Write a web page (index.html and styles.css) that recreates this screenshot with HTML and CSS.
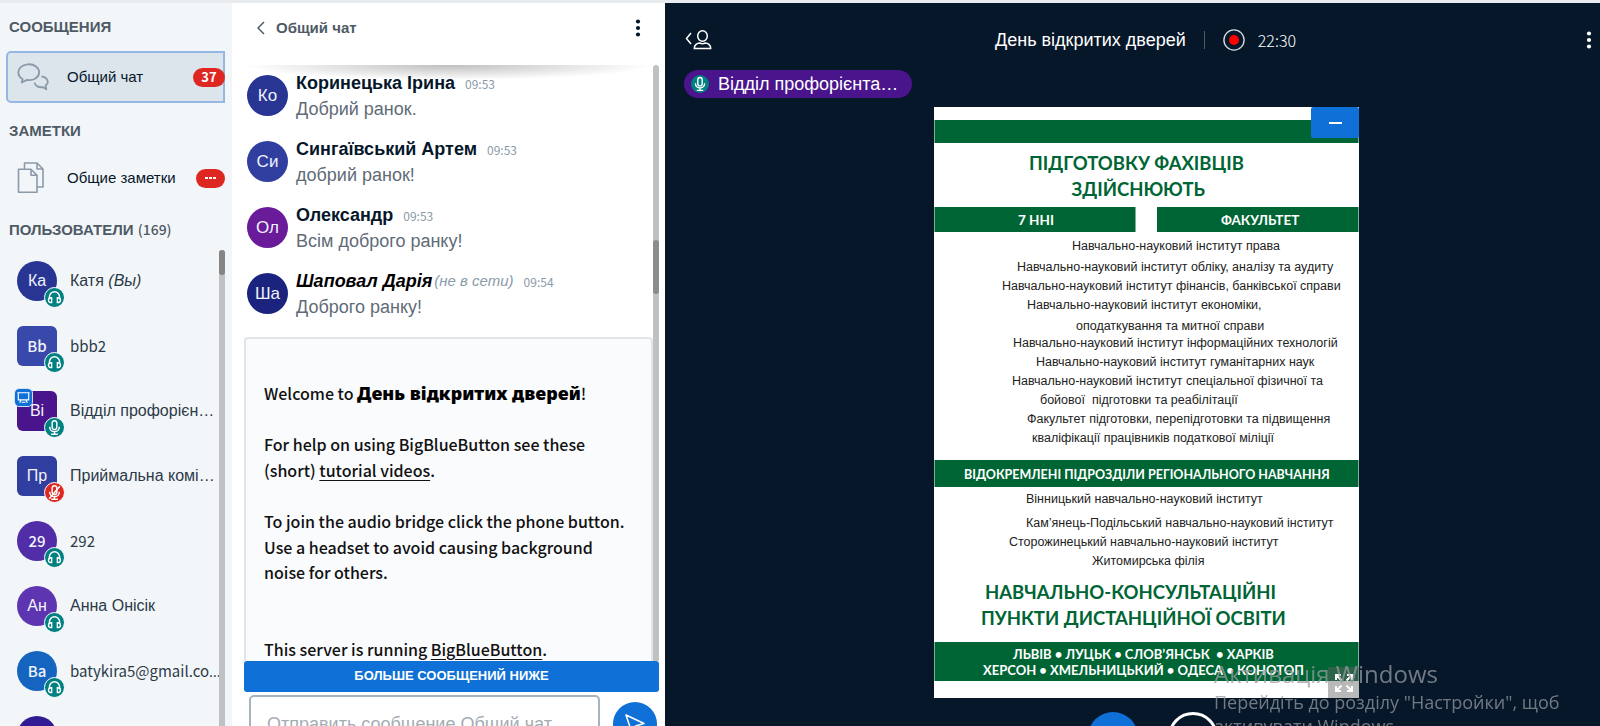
FILE: index.html
```html
<!DOCTYPE html>
<html lang="ru">
<head>
<meta charset="utf-8">
<title>День відкритих дверей</title>
<link rel="stylesheet" href="styles.css">
</head>
<body>
<svg class="sprite" aria-hidden="true">
  <symbol id="i-headset" viewBox="0 0 18 18"><path d="M4.2 10V8.3a4.8 4.8 0 0 1 9.6 0V10" fill="none" stroke="#fff" stroke-width="1.4"/><path d="M6.3 9.2v4.6c-2 0-3-.8-3-2.3s1-2.3 3-2.3zM11.7 9.2v4.6c2 0 3-.8 3-2.3s-1-2.3-3-2.3z" fill="none" stroke="#fff" stroke-width="1.3"/></symbol>
  <symbol id="i-mic" viewBox="0 0 18 18"><g fill="none" stroke="#fff" stroke-width="1.4"><rect x="6.8" y="2.5" width="4.4" height="8.4" rx="2.2"/><path d="M4.4 8.2c0 6.2 9.2 6.2 9.2 0M9 13v2.4M5.8 15.4h6.4"/></g></symbol>
  <symbol id="i-more" viewBox="0 0 6 18"><circle cx="3" cy="2.5" r="2.1"/><circle cx="3" cy="9" r="2.1"/><circle cx="3" cy="15.5" r="2.1"/></symbol>
</svg>
<div class="app">
  <nav class="sidebar">
    <h2 class="side-title">СООБЩЕНИЯ</h2>
    <button class="side-item active" type="button">
      <svg class="side-icon" viewBox="0 0 32 32" fill="none" stroke="#8b9aa8" stroke-width="1.8" stroke-linejoin="round"><path d="M5.6 18.2C.8 15.500 0 9.800 3.500 6.300c3.600-3.600 11-4.200 15.400-.8 4.500 3.400 4.300 9-.5 12-2.600 1.600-5.500 2-8.400 1.400l-5.200 2.600z"/><path d="M24.500 15.500c4.500.3 7.100 3.700 5.900 6.800-.4 1-1 1.700-1.800 2.200l.7 3.800-3.600-2.200c-3.900.6-7.600-1.100-8.200-4.400"/></svg>
      <span class="side-label">Общий чат</span><span class="badge num">37</span>
    </button>
    <h2 class="side-title">ЗАМЕТКИ</h2>
    <button class="side-item notes" type="button">
      <svg class="side-icon" viewBox="0 0 32 32" fill="none" stroke="#8b9aa8" stroke-width="1.6" stroke-linejoin="round"><path d="M7.500 7V1h12.500l6 6v18h-6M20 1v6h6"/><path d="M1.500 7.200h12.500l6 6v17h-18.500zM14 7.200v6h6"/></svg>
      <span class="side-label">Общие заметки</span><span class="badge dots"><i></i><i></i><i></i></span>
    </button>
    <h2 class="side-title">ПОЛЬЗОВАТЕЛИ <span class="count">(169)</span></h2>
    <div class="users-wrap">
      <ul class="users">
        <li><span class="avatar c1">Ка<svg class="status"><use href="#i-headset"/></svg></span><span class="name">Катя <em>(Вы)</em></span></li>
        <li><span class="avatar square c2 latin">Bb<svg class="status"><use href="#i-headset"/></svg></span><span class="name latin">bbb2</span></li>
        <li><span class="avatar square c3">Ві<svg class="presenter" viewBox="0 0 18 18" fill="none" stroke="#fff" stroke-width="1.200"><path d="M2.500 4h13M3.500 4v7.500h11V4M6.500 11.500L5 14.500M11.500 11.500l1.500 3M7 14h4"/></svg><svg class="status"><use href="#i-mic"/></svg></span><span class="name">Відділ профорієн…</span></li>
        <li><span class="avatar square c4">Пр<svg class="status muted" viewBox="0 0 18 18"><use href="#i-mic"/><path d="M4 15L14 3" stroke="#fff" stroke-width="1.400"/></svg></span><span class="name">Приймальна комі…</span></li>
        <li><span class="avatar c5 latin">29<svg class="status"><use href="#i-headset"/></svg></span><span class="name latin">292</span></li>
        <li><span class="avatar c6">Ан<svg class="status"><use href="#i-headset"/></svg></span><span class="name">Анна Онісік</span></li>
        <li><span class="avatar c7 latin">Ba<svg class="status"><use href="#i-headset"/></svg></span><span class="name latin">batykira5@gmail.co<span class="more-text">…</span></span></li>
        <li><span class="avatar c8"></span><span class="name"></span></li>
      </ul>
      <div class="track"><div class="thumb"></div></div>
    </div>
  </nav>

  <section class="chat">
    <header class="chat-head">
      <button class="back" type="button"><svg class="chevron" viewBox="0 0 8 14" fill="none" stroke="#4e5a66" stroke-width="1.500"><path d="M7 1L1 7l6 6"/></svg>Общий чат</button>
      <button class="more" type="button" aria-label="Меню чата"><svg><use href="#i-more"/></svg></button>
    </header>
    <div class="chat-body">
      <div class="messages">
        <article class="msg"><span class="avatar c1">Ко</span><div><p class="who"><b>Коринецька Ірина</b><time>09:53</time></p><p class="text">Добрий ранок.</p></div></article>
        <article class="msg"><span class="avatar c4">Си</span><div><p class="who"><b>Сингаївський Артем</b><time>09:53</time></p><p class="text">добрий ранок!</p></div></article>
        <article class="msg"><span class="avatar c9">Ол</span><div><p class="who"><b>Олександр</b><time>09:53</time></p><p class="text">Всім доброго ранку!</p></div></article>
        <article class="msg"><span class="avatar c10">Ша</span><div><p class="who"><b class="off">Шаповал Дарія</b><em>(не в сети)</em><time>09:54</time></p><p class="text">Доброго ранку!</p></div></article>
        <div class="welcome">Welcome to <strong>День відкритих дверей</strong>!<br><br>For help on using BigBlueButton see these (short) <a href="#">tutorial videos</a>.<br><br>To join the audio bridge click the phone button. Use a headset to avoid causing background noise for others.<br><br><br>This server is running <a href="#">BigBlueButton</a>.</div>
      </div>
      <div class="track"><div class="thumb"></div></div>
    </div>
    <button class="below" type="button">БОЛЬШЕ СООБЩЕНИЙ НИЖЕ</button>
    <form class="composer">
      <input type="text" placeholder="Отправить сообщение Общий чат" aria-label="Отправить сообщение Общий чат">
      <button class="send" type="button" aria-label="Отправить"><svg viewBox="0 0 22 22" fill="none" stroke="#fff" stroke-width="1.500" stroke-linejoin="round"><path d="M2 2l18 8.500L11.500 13 8 20z"/></svg></button>
    </form>
  </section>

  <main class="stage">
    <header class="stage-head">
      <button class="toggle" type="button" aria-label="Пользователи"><svg viewBox="0 0 28 22" fill="none" stroke="#fff" stroke-width="1.500"><path d="M6 4L1.500 9.500 6 15"/><ellipse cx="17.500" cy="7" rx="4.800" ry="5.300"/><path d="M9.300 19.500c0-3.600 3-5.500 5.300-5.500 1.800.8 4 .8 5.800 0 2.300 0 5.300 1.900 5.300 5.500z"/></svg></button>
      <div class="title"><h1>День відкритих дверей</h1><span class="bar"></span><svg class="rec" viewBox="0 0 24 24"><circle cx="12" cy="12" r="11" fill="none" stroke="#d5dae0" stroke-width="1.500"/><circle cx="12" cy="12" r="5.500" fill="red"/></svg><span class="clock">22:30</span></div>
      <button class="options" type="button" aria-label="Параметры"><svg><use href="#i-more"/></svg></button>
    </header>
    <div class="talkers"><button class="talker" type="button"><svg><use href="#i-mic"/></svg><span>Відділ профорієнта…</span></button></div>
    <div class="canvas">
      <div class="slide">
        <svg class="page" viewBox="0 0 850 1182">
          <rect width="850" height="1182" fill="#fff"/>
          <g class="band"><rect x="1" y="26" width="848" height="46"/><rect x="1" y="200" width="402" height="50"/><rect x="446" y="200" width="403" height="50"/><rect x="1" y="706" width="848" height="54"/><rect x="1" y="1070" width="848" height="78"/></g>
          <g class="s-head"><text x="190" y="126">ПІДГОТОВКУ ФАХІВЦІВ</text><text x="275" y="178">ЗДІЙСНЮЮТЬ</text><text x="102" y="983">НАВЧАЛЬНО-КОНСУЛЬТАЦІЙНІ</text><text x="94" y="1035">ПУНКТИ ДИСТАНЦІЙНОЇ ОСВІТИ</text></g>
          <g class="s-band"><text x="168" y="235">7 ННІ</text><text x="574" y="236">ФАКУЛЬТЕТ</text></g>
          <g class="s-band region"><text x="60" y="743">ВІДОКРЕМЛЕНІ ПІДРОЗДІЛИ РЕГІОНАЛЬНОГО НАВЧАННЯ</text></g>
          <g class="s-band cities"><text x="158" y="1103">ЛЬВІВ • ЛУЦЬК • СЛОВ’ЯНСЬК &#160;• ХАРКІВ</text><text x="98" y="1135">ХЕРСОН • ХМЕЛЬНИЦЬКИЙ • ОДЕСА • КОНОТОП</text></g>
          <g class="s-line">
            <text x="276" y="286">Навчально-науковий інститут права</text>
            <text x="166" y="327">Навчально-науковий інститут обліку, аналізу та аудиту</text>
            <text x="136" y="366">Навчально-науковий інститут фінансів, банківської справи</text>
            <text x="186" y="403">Навчально-науковий інститут економіки,</text>
            <text x="284" y="445">оподаткування та митної справи</text>
            <text x="158" y="479">Навчально-науковий інститут інформаційних технологій</text>
            <text x="204" y="517">Навчально-науковий інститут гуманітарних наук</text>
            <text x="156" y="555">Навчально-науковий інститут спеціальної фізичної та</text>
            <text x="212" y="593">бойової &#160;підготовки та реабілітації</text>
            <text x="186" y="632">Факультет підготовки, перепідготовки та підвищення</text>
            <text x="196" y="670">кваліфікації працівників податкової міліції</text>
            <text x="184" y="791">Вінницький навчально-науковий інститут</text>
            <text x="184" y="840">Кам’янець-Подільський навчально-науковий інститут</text>
            <text x="150" y="878">Сторожинецький навчально-науковий інститут</text>
            <text x="316" y="916">Житомирська філія</text>
          </g>
        </svg>
        <button class="minimize" type="button" aria-label="Свернуть"><span></span></button>
        <button class="fullscreen" type="button" aria-label="На весь экран"><svg viewBox="0 0 20 20" fill="none" stroke="#fff" stroke-width="2"><path d="M7.500 7.500L2 2M2 7V2h5M12.500 7.500L18 2M13 2h5v5M7.500 12.500L2 18M2 13v5h5M12.500 12.500L18 18M13 18h5v-5"/></svg></button>
      </div>
    </div>
    <footer class="actions"><button class="round blue" type="button" aria-label="Микрофон"></button><button class="round ring" type="button" aria-label="Звук"></button></footer>
  </main>
</div>
<aside class="watermark"><p class="wm-title">Активація Windows</p><p>Перейдіть до розділу "Настройки", щоб<br>активувати Windows.</p></aside>
</body>
</html>
```
FILE: styles.css
```css
* { box-sizing: border-box; }
body { margin: 0; height: 100vh; overflow: hidden; background: #fff; color: #06172a; font: 16px/24px "Liberation Sans", Arial, sans-serif; }
h1, h2, p, ul { margin: 0; padding: 0; }
button { border: 0; padding: 0; background: none; font: inherit; color: inherit; }
.sprite { position: absolute; width: 0; height: 0; }
.latin, .num, .count, time, .clock { font-family: "Noto Sans CJK SC", sans-serif; }

.app { display: grid; grid-template-columns: 232px 433px 1fr; height: 100vh; border-top: 3px solid #e9ecef; }

.sidebar { display: flex; flex-direction: column; min-height: 0; padding-right: 7px; background: #f3f6f9; }
.side-title { padding: 12px 0 0 9px; font-size: 15px; line-height: 24px; color: #4e5a66; }
.count { font-size: 14px; font-weight: 500; line-height: 20px; }
.side-item { flex: none; display: flex; align-items: center; height: 52px; margin: 12px 0 0 6px; padding: 0 0 0 9px; border: 2px solid transparent; border-right: 0; border-radius: 5px 0 0 5px; text-align: left; }
.side-item + .side-title { padding-top: 16px; }
.notes { height: 48px; margin-top: 11px; }
.active { background: #dce4ec; border: 2px solid #95b8e3; }
.active .badge { margin-right: -2px; }
.side-icon { width: 32px; height: 32px; }
.side-label { flex: 1; padding-left: 18px; font-size: 15px; }
.badge { display: flex; justify-content: center; align-items: center; gap: 1px; width: 32px; height: 19px; border-radius: 10px; background: #df2721; color: #fff; font-size: 13px; font-weight: 700; }
.dots { width: 29px; }
.dots i { width: 3px; height: 2px; background: #fff; }

.users-wrap { flex: 1; display: flex; min-height: 0; margin-top: 8px; }
.users { flex: 1; display: flex; flex-direction: column; gap: 4px; min-width: 0; overflow: hidden; list-style: none; }
.users li { flex: none; display: flex; align-items: center; gap: 13px; height: 61px; padding-left: 17px; color: #2c3a48; }
.name { flex: 1; min-width: 0; white-space: nowrap; }
.name.latin { font-size: 15px; }
.more-text { font-family: "Open Sans", sans-serif; line-height: 1; }
.avatar { position: relative; flex: none; display: flex; justify-content: center; align-items: center; width: 40px; height: 40px; border-radius: 50%; color: #f1f3fa; font-size: 16px; }
.avatar.latin { font-size: 15px; font-weight: 500; }
.square { border-radius: 6px; }
.status { position: absolute; right: -8px; bottom: -7px; width: 21px; height: 21px; border: 1px solid #fff; border-radius: 50%; background: #008081; }
.muted { background: #df2721; }
.presenter { position: absolute; left: -2px; top: -2px; width: 17px; height: 17px; border-radius: 4px; background: #0f70d7; outline: 1px solid #cfe0f5; }
.c1 { background: #283593; } .c2 { background: #3949ab; } .c3 { background: #4a148c; } .c4 { background: #303f9f; }
.c5 { background: #512da8; } .c6 { background: #5e35b1; } .c7 { background: #1565c0; } .c8 { background: #311b92; }
.c9 { background: #6a1b9a; } .c10 { background: #1a237e; }
.track { flex: none; width: 6px; background: #bfc1c4; border-radius: 3px 3px 0 0; }
.thumb { height: 25px; border-radius: 3px; background: #858585; }

.chat { display: flex; flex-direction: column; min-height: 0; padding: 0 6px 0 12px; background: #fff; }
.chat-head { display: flex; justify-content: space-between; height: 62px; padding: 12px 18px 0 13px; }
.back { display: flex; align-items: center; gap: 11px; height: 26px; font-size: 15px; font-weight: 700; color: #4e5a66; }
.chevron { width: 8px; height: 14px; }
.more svg, .options svg { display: block; width: 6px; height: 18px; }
.more { height: 26px; fill: #06172a; }
.chat-body { flex: 1; display: flex; min-height: 0; }
.chat-body .thumb { margin-top: 175px; height: 54px; background: #8c8c8c; }
.messages { flex: 1; min-width: 0; overflow: hidden; background: radial-gradient(farthest-side at 50% 0, rgba(0,0,0,.25), rgba(0,0,0,0)) center top / 100% 15px no-repeat; }
.msg { display: flex; gap: 8px; height: 66px; padding: 6px 0 0 3px; }
.msg .avatar { width: 41px; height: 41px; margin-top: 4px; font-size: 17px; }
.msg .who { display: flex; align-items: center; height: 24px; font-size: 18px; }
.who time { padding: 2px 0 0 10px; font-size: 12px; color: #8b9aa8; }
.who em { padding-left: 2px; font-size: 15px; color: #8b9aa8; }
.off { font-style: italic; color: #000; }
.msg .text { padding-top: 2px; font-size: 18px; line-height: 24px; color: #5f6b77; }
.welcome { margin-top: 8px; padding: 42px 18px 20px; border: 2px solid #e1e5ea; border-radius: 4px; background: #fafbfd; color: #111; font-family: "Noto Sans CJK SC", sans-serif; font-size: 16px; font-weight: 500; line-height: 1.6; }
.welcome strong { font-family: "Noto Sans", sans-serif; font-size: 18px; font-weight: 900; line-height: 1; color: #000; }
.welcome a { color: inherit; text-underline-offset: 3px; }
.below { flex: none; height: 31px; padding-bottom: 2px; border-radius: 3px; background: #0f70d7; color: #fff; font-size: 13px; font-weight: 700; }
.composer { flex: none; display: flex; gap: 13px; height: 34px; padding: 3px 2px 0 5px; }
.composer input { flex: 1; min-width: 0; height: 58px; padding: 0 16px; border: 2px solid #a7b3bd; border-radius: 5px; background: #fff; font: 18px "Liberation Sans", Arial, sans-serif; }
.composer input::placeholder { color: #a5acb3; }
.send { display: grid; place-items: center; width: 44px; height: 44px; margin-top: 7px; border-radius: 50%; background: #0f70d7; }
.send svg { width: 22px; height: 22px; }

.stage { display: flex; flex-direction: column; min-width: 0; min-height: 0; background: #06172a; color: #fff; }
.stage-head { display: grid; grid-template-columns: 1fr auto 1fr; align-items: center; height: 67px; padding: 6px 8px 0 20px; }
.toggle { justify-self: start; }
.toggle svg { display: block; width: 28px; height: 22px; }
.title { display: flex; align-items: center; padding-left: 14px; }
.title h1 { font-size: 18px; font-weight: 400; }
.bar { width: 1px; height: 18px; margin: 0 18px; background: #4e5a66; }
.rec { width: 22px; height: 22px; margin-right: 13px; }
.clock { font-size: 16px; font-weight: 300; }
.options { justify-self: end; fill: #fff; }
.talkers { padding-left: 19px; }
.talker { display: flex; align-items: center; gap: 9px; width: 228px; height: 28px; padding: 0 10px 0 7px; border-radius: 14px; background: #4a148c; font-size: 18px; }
.talker svg { flex: none; width: 18px; height: 18px; border-radius: 50%; background: #008081; }
.talker span { white-space: nowrap; }
.canvas { flex: 1; display: flex; justify-content: center; min-height: 0; padding: 9px 0 0 28px; }
.slide { position: relative; height: 100%; aspect-ratio: 425 / 591; }
.page { display: block; width: 100%; height: 100%; }
.band { fill: #006534; }
.s-head { fill: #006534; font: 700 37px Lato, sans-serif; }
.s-band { fill: #fff; font: 700 27px Lato, sans-serif; }
.s-band.cities { font-size: 26px; }
.s-band.region { font-size: 25px; }
.s-line { fill: #222; font: 25px "Liberation Sans", Arial, sans-serif; }
.minimize { position: absolute; right: 0; top: 0; display: grid; place-items: center; width: 48px; height: 31px; border-radius: 2px; background: #0f70d7; }
.minimize span { width: 13px; height: 2px; background: #fff; }
.fullscreen { position: absolute; right: 0; bottom: 0; display: grid; place-items: center; width: 31px; height: 31px; background: rgba(100,100,100,.45); }
.fullscreen svg { width: 20px; height: 20px; }
.actions { flex: none; display: flex; justify-content: center; gap: 30px; height: 28px; padding: 14px 0 0 40px; }
.round { width: 50px; height: 50px; border-radius: 50%; }
.blue { background: #0f70d7; }
.ring { border: 3px solid #fff; }

.watermark { position: fixed; left: 1214px; top: 657px; width: 360px; font: 18px/24px "Open Sans", sans-serif; color: rgba(150,155,160,.75); pointer-events: none; }
.wm-title { font-size: 24px; line-height: 33px; }
```
